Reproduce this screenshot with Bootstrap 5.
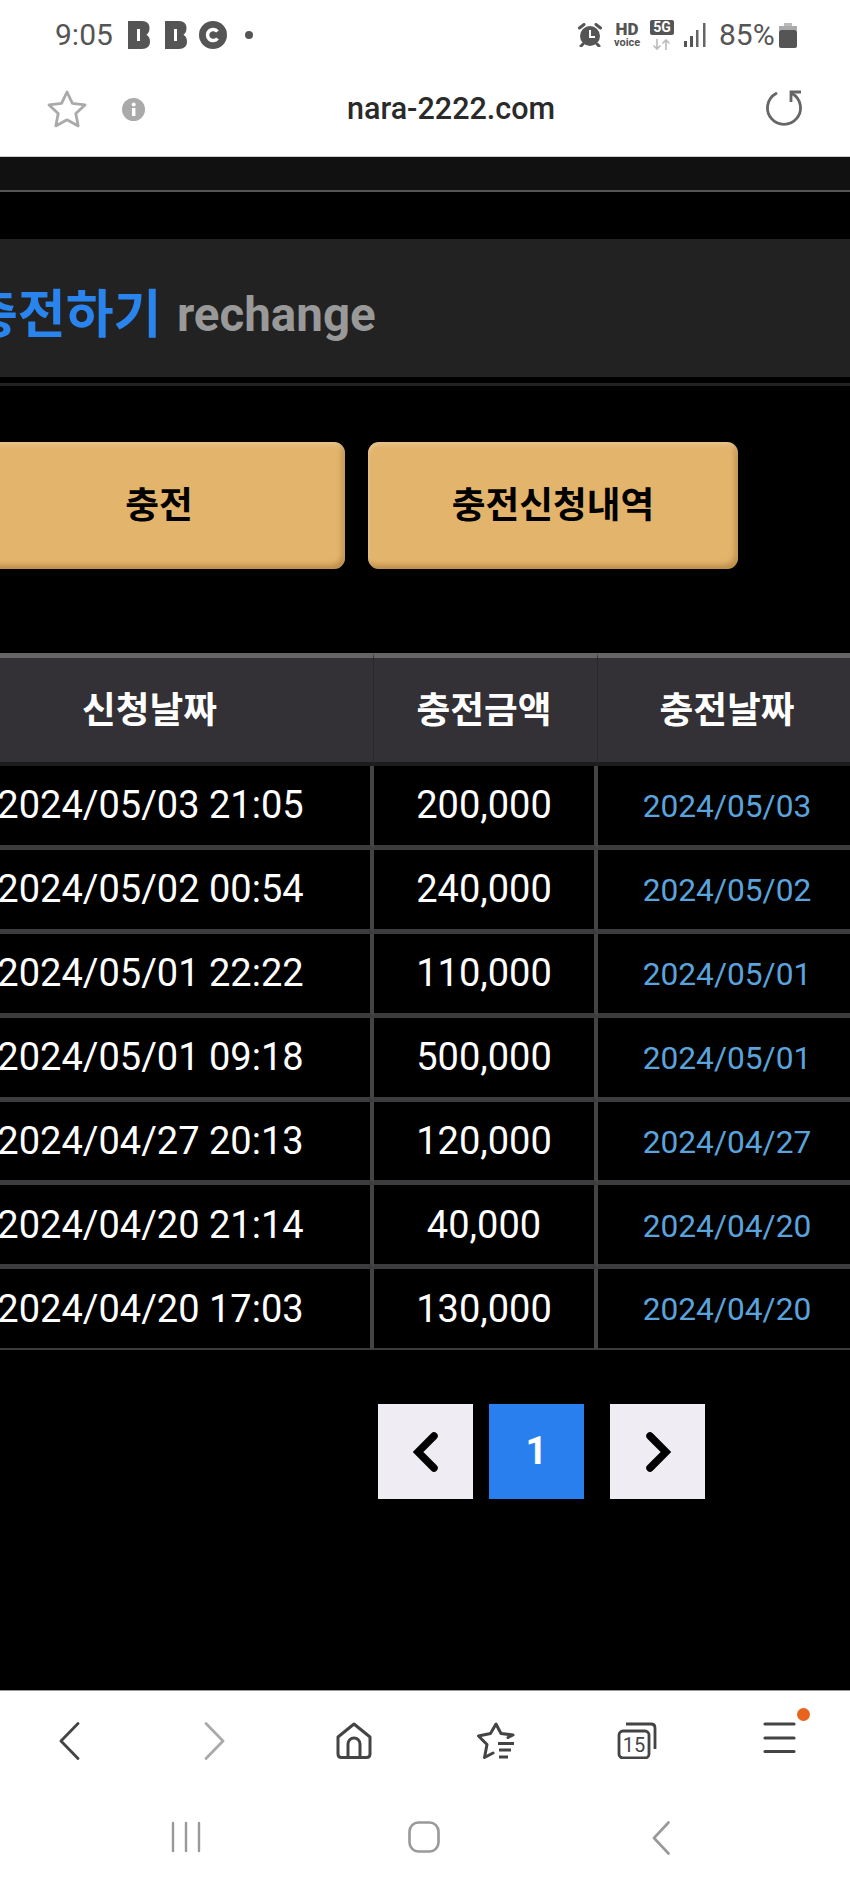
<!DOCTYPE html>
<html lang="ko">
<head>
    <meta charset="UTF-8">
    <meta name="viewport" content="width=device-width, initial-scale=1.0">
    <title>nara-2222.com</title>
    <link href="https://cdn.jsdelivr.net/npm/bootstrap@5.3.0/dist/css/bootstrap.min.css" rel="stylesheet">
    <style>
        html, body { height: 100%; }
        body {
            background: #000;
            font-family: Roboto, "Noto Sans CJK KR", sans-serif;
            overflow: hidden;
        }
        svg { display: block; flex: none; }

        /* phone status bar */
        .status-bar { height: 70px; background: #fff; color: #555; padding: 0 53px 0 55px; }
        .clock { font-size: 30px; line-height: 1; width: 59px; margin-right: 14px; }
        .pct { font-size: 30px; line-height: 1; width: 54px; margin-left: -1px; white-space: nowrap; }
        .hd-mark { width: 26px; margin: 0 10px 0 12px; text-align: center; font-weight: 700; line-height: 1; }
        .hd-mark b { display: block; font-size: 17px; font-weight: 900; line-height: 13px; }
        .hd-mark span { display: block; font-size: 11px; margin-top: 1px; }
        .net-mark { width: 24px; margin-right: 10px; }
        .net-5g { background: #555; color: #fff; font-size: 14px; font-weight: 700; line-height: 15px; height: 15px; border-radius: 2px; text-align: center; }

        /* browser url bar */
        .url-bar { height: 87px; background: #fff; border-bottom: 1px solid #ccc; padding: 0 47px 7px 47px; }
        .url-star { margin-top: -2px; }
        .url-reload { margin: -4px 1px 0 0; }
        .url-text { font-size: 30.5px; font-weight: 500; color: #2a2a2a; line-height: 1; margin-left: 202px; }

        /* page */
        .page-main { flex: 1 1 auto; min-height: 0; overflow: hidden; background: #000; }
        .top-strip { height: 35px; background: #111; border-bottom: 2px solid #555; }
        .title-panel {
            height: 138px; margin-top: 47px; margin-bottom: 6px; padding-top: 16px;
            background: #222;
        }
        .title-panel h2 { margin: 0 0 0 -30px; font-size: 52px; font-weight: 700; color: #2a84ee; line-height: 1; }
        .title-panel span { margin-left: 15.500px; font-size: 47.5px; font-weight: 700; color: #999; line-height: 1; }
        .title-rule { height: 3px; background: #222; }

        .tab-btns { margin-top: 56px; margin-left: -27px; gap: 23px; }
        .tab-btn {
            height: 127px; border: 0; border-radius: 11px;
            background: #e2b46c; color: #000;
            font-size: 36.7px; font-weight: 700; padding: 0;
            box-shadow: inset 0 3px 4px rgba(255,255,255,.22), inset -3px -4px 5px rgba(130,85,25,.4), inset 2px 0 3px rgba(255,255,255,.1);
        }
        .tab-btn.one { width: 372px; }
        .tab-btn.two { width: 370px; }

        .hist-table {
            width: 925px; max-width: none; margin: 84px 0 0 -69px;
            table-layout: fixed; border-collapse: separate; border-spacing: 0;
            color: #fff; --bs-table-bg: transparent; --bs-table-color: #fff;
        }
        .hist-table th {
            height: 113px; padding: 2px 0 0; text-align: center; vertical-align: middle;
            background: #333135; color: #fff; font-size: 36.7px; font-weight: 700;
            border-top: 5px solid #666; border-bottom: 4px solid #1c1c1e; border-right: 1px solid #29282b;
        }
        .hist-table th:nth-child(1) { padding-right: 5px; }
        .hist-table th:nth-child(2) { padding-right: 3px; }
        .hist-table td {
            height: 83.9px; padding: 0; text-align: center; vertical-align: middle;
            background: #000; color: #fff; font-size: 38px; font-weight: 400; line-height: 1;
            border-right: 4px solid #444; border-bottom: 5px solid #3c3c3e;
        }
        .hist-table tr:last-child td { border-bottom-width: 2px; height: 81px; }
        .hist-table th:last-child, .hist-table td:last-child { border-right: 0; }
        .hist-table td.paid { color: #5ba3dc; font-size: 31.7px; padding-top: 3px; }

        .pager { margin-top: 54px; padding-left: 378px; list-style: none; }
        .pager .page-item .page-link {
            width: 95px; height: 95px; padding: 0; margin-left: 0; border: 0; border-radius: 0;
            background: #efedf3; color: #000; font-size: 38px; font-weight: 700;
            display: flex; align-items: center; justify-content: center;
        }
        .pager .page-item.active .page-link { background: #2a7fef; color: #fff; margin: 0 26px 0 16px; }

        /* browser toolbar */
        .tool-bar { height: 111px; background: #fff; border-top: 1px solid #999; padding-top: 31px; }
        .tool-bar .col-2 { display: flex; justify-content: center; }
        .fwd-key { margin-left: 5px; }
        .back-key { margin-right: 2px; }
        .soft-keys { height: 88px; background: #fff; padding: 20px 0 0 171px; }
        .soft-keys .home-key { margin: 0 212px 0 207px; }
    </style>
</head>
<body>
<div class="d-flex flex-column vh-100">

    <div class="status-bar d-flex align-items-center flex-none">
        <div class="clock">9:05</div>
        <svg width="22" height="28" viewBox="0 0 22 28" style="margin-right:15px"><path fill="#555" fill-rule="evenodd" d="M0 0h14c5 0 7.500 3 7.500 7 0 3-1 5.500-3 6.800 2.300 1.200 3.500 3.700 3.500 7 0 4.500-3 7.200-8 7.200H0zM9 8v12h3V8z"/></svg>
        <svg width="22" height="28" viewBox="0 0 22 28" style="margin-right:12px"><path fill="#555" fill-rule="evenodd" d="M0 0h14c5 0 7.500 3 7.500 7 0 3-1 5.500-3 6.800 2.300 1.200 3.500 3.700 3.500 7 0 4.500-3 7.200-8 7.200H0zM9 8v12h3V8z"/></svg>
        <svg width="28" height="28" viewBox="0 0 28 28" style="margin-right:18px"><circle cx="14" cy="14" r="14" fill="#555"/><path fill="none" stroke="#fff" stroke-width="3.500" d="M18.500 10.500a5.600 5.600 0 1 0 0 7"/></svg>
        <svg width="8" height="8" viewBox="0 0 8 8"><circle cx="4" cy="4" r="4" fill="#555"/></svg>

        <div class="ms-auto d-flex align-items-center">
            <svg width="24" height="24" viewBox="0 0 24 24"><path stroke="#555" stroke-width="3" stroke-linecap="round" d="M1.500 5 6 1.500M22.500 5 18 1.500M5 21l-2 2M19 21l2 2"/><circle cx="12" cy="13" r="10" fill="#555"/><path fill="none" stroke="#fff" stroke-width="2" d="M12 7v7h5"/></svg>
            <div class="hd-mark"><b>HD</b><span>voice</span></div>
            <div class="net-mark">
                <div class="net-5g">5G</div>
                <svg width="24" height="11" viewBox="0 0 24 11" class="mt-1"><path fill="none" stroke="#bbb" stroke-width="1.600" d="M7 0v10M3.500 6.500 7 10l3.500-3.500M16 11V1M12.500 4.500 16 1l3.500 3.500"/></svg>
            </div>
            <svg width="22" height="24" viewBox="0 0 22 24" style="margin-right:14px"><rect x="0" y="18" width="3" height="6" fill="#555"/><rect x="6" y="13" width="3" height="11" fill="#555"/><rect x="12" y="7" width="2.500" height="17" fill="#666"/><rect x="19" y="0" width="2.500" height="24" fill="#666"/></svg>
            <div class="pct">85%</div>
            <svg width="18" height="25" viewBox="0 0 18 25" style="margin-left:6px"><path fill="#bbb" d="M5 0h8v3H5z"/><rect x="0" y="3" width="18" height="4" fill="#aaa"/><rect x="0" y="7" width="18" height="18" rx="2" fill="#555"/></svg>
        </div>
    </div>

    <div class="url-bar d-flex align-items-center flex-none">
        <svg class="url-star" width="40" height="38" viewBox="0 0 40 38"><path fill="none" stroke="#aaa" stroke-width="2.800" stroke-linejoin="round" d="M20 2l5.400 11.300 12.600 1.600-9.200 8.600 2.400 12.400L20 29.800 8.800 35.900l2.400-12.400L2 14.900l12.600-1.600z"/></svg>
        <svg width="23" height="23" viewBox="0 0 23 23" style="margin-left:35px"><circle cx="11.500" cy="11.500" r="11.500" fill="#aaa"/><rect x="10" y="10" width="3.400" height="8" fill="#fff"/><circle cx="11.700" cy="6.500" r="2" fill="#fff"/></svg>
        <div class="url-text">nara-2222.com</div>
        <svg class="ms-auto url-reload" width="38" height="37" viewBox="0 0 38 37"><path fill="none" stroke="#666" stroke-width="2.800" stroke-linecap="round" d="M12 4.500A16.500 16.500 0 1 0 28 4.500"/><path fill="none" stroke="#666" stroke-width="2.800" d="M27 13V3h10"/></svg>
    </div>

    <main class="page-main">
        <div class="top-strip"></div>

        <div class="title-panel d-flex align-items-center">
            <h2>충전하기</h2>
            <span>rechange</span>
        </div>
        <div class="title-rule"></div>

        <div class="tab-btns d-flex">
            <button type="button" class="btn tab-btn one">충전</button>
            <button type="button" class="btn tab-btn two">충전신청내역</button>
        </div>

        <table class="table hist-table mb-0">
            <colgroup>
                <col style="width:443px">
                <col style="width:224px">
                <col style="width:258px">
            </colgroup>
            <thead>
                <tr><th>신청날짜</th><th>충전금액</th><th>충전날짜</th></tr>
            </thead>
            <tbody>
                <tr><td>2024/05/03 21:05</td><td>200,000</td><td class="paid">2024/05/03</td></tr>
                <tr><td>2024/05/02 00:54</td><td>240,000</td><td class="paid">2024/05/02</td></tr>
                <tr><td>2024/05/01 22:22</td><td>110,000</td><td class="paid">2024/05/01</td></tr>
                <tr><td>2024/05/01 09:18</td><td>500,000</td><td class="paid">2024/05/01</td></tr>
                <tr><td>2024/04/27 20:13</td><td>120,000</td><td class="paid">2024/04/27</td></tr>
                <tr><td>2024/04/20 21:14</td><td>40,000</td><td class="paid">2024/04/20</td></tr>
                <tr><td>2024/04/20 17:03</td><td>130,000</td><td class="paid">2024/04/20</td></tr>
            </tbody>
        </table>

        <ul class="pagination pager mb-0">
            <li class="page-item"><a class="page-link" href="#" aria-label="이전"><svg width="26" height="40" viewBox="0 0 26 40"><path fill="none" stroke="#000" stroke-width="7.500" stroke-linecap="round" stroke-linejoin="miter" d="M21 4 5 20l16 16"/></svg></a></li>
            <li class="page-item active"><a class="page-link" href="#">1</a></li>
            <li class="page-item"><a class="page-link" href="#" aria-label="다음"><svg width="26" height="40" viewBox="0 0 26 40"><path fill="none" stroke="#000" stroke-width="7.500" stroke-linecap="round" stroke-linejoin="miter" d="M5 4l16 16L5 36"/></svg></a></li>
        </ul>
    </main>

    <div class="tool-bar flex-none">
        <div class="row g-0">
            <div class="col-2"><svg class="back-key" width="21" height="38" viewBox="0 0 21 38"><path fill="none" stroke="#444" stroke-width="2.800" stroke-linecap="round" stroke-linejoin="round" d="M19 1.500 2 19l17 17.500"/></svg></div>
            <div class="col-2"><svg class="fwd-key" width="21" height="38" viewBox="0 0 21 38"><path fill="none" stroke="#aaa" stroke-width="2.800" stroke-linecap="round" stroke-linejoin="round" d="M2 1.500 19 19 2 36.500"/></svg></div>
            <div class="col-2"><svg width="36" height="37" viewBox="0 0 36 37"><path fill="none" stroke="#444" stroke-width="3" stroke-linejoin="round" d="M2 15 18 2l16 13v17c0 2.500-1.500 3.500-3.500 3.500h-25C3.500 35.500 2 34.500 2 32z"/><path fill="none" stroke="#444" stroke-width="3" d="M12 35V22a6 6 0 0 1 12 0v13"/></svg></div>
            <div class="col-2"><svg width="40" height="38" viewBox="0 0 40 38"><path fill="none" stroke="#444" stroke-width="3" stroke-linecap="round" stroke-linejoin="round" d="M32 15.500 37 13l-12-1.500L20 2l-5.500 9.500L2.500 14l8.500 8.500L8.500 35.500 17 31"/><path fill="none" stroke="#444" stroke-width="3" d="M22 21.500h16M23 28h12M23 35h9"/></svg></div>
            <div class="col-2"><svg width="40" height="37" viewBox="0 0 40 37"><path fill="none" stroke="#444" stroke-width="2.800" d="M9 2h25c3 0 4 1.500 4 4v21"/><rect x="2" y="9" width="30" height="27" rx="4" fill="none" stroke="#444" stroke-width="2.800"/><text x="17" y="30" text-anchor="middle" font-family="Roboto, sans-serif" font-size="20" fill="#444">15</text></svg></div>
            <div class="col-2 position-relative">
                <svg width="33" height="32" viewBox="0 0 33 32"><path stroke="#444" stroke-width="3.200" stroke-linecap="round" d="M2 2h29M2 16h29M2 29.500h29"/></svg>
                <svg class="position-absolute" style="top:-14px;left:89px" width="13" height="13" viewBox="0 0 13 13"><circle cx="6.500" cy="6.500" r="6.500" fill="#e8631c"/></svg>
            </div>
        </div>
    </div>

    <div class="soft-keys d-flex align-items-start flex-none">
        <svg width="30" height="32" viewBox="0 0 30 32"><path stroke="#999" stroke-width="2.400" stroke-linecap="round" d="M2 2v28M15 2v28M28 2v28"/></svg>
        <svg class="home-key" width="32" height="32" viewBox="0 0 32 32"><rect x="1.500" y="1.500" width="29" height="29" rx="9" fill="none" stroke="#999" stroke-width="2.600"/></svg>
        <svg width="18" height="34" viewBox="0 0 18 34"><path fill="none" stroke="#999" stroke-width="2.600" stroke-linecap="round" stroke-linejoin="round" d="M16.500 1.500 2 17l14.500 15.500"/></svg>
    </div>

</div>
<script src="https://cdn.jsdelivr.net/npm/bootstrap@5.3.0/dist/js/bootstrap.bundle.min.js"></script>
</body>
</html>
